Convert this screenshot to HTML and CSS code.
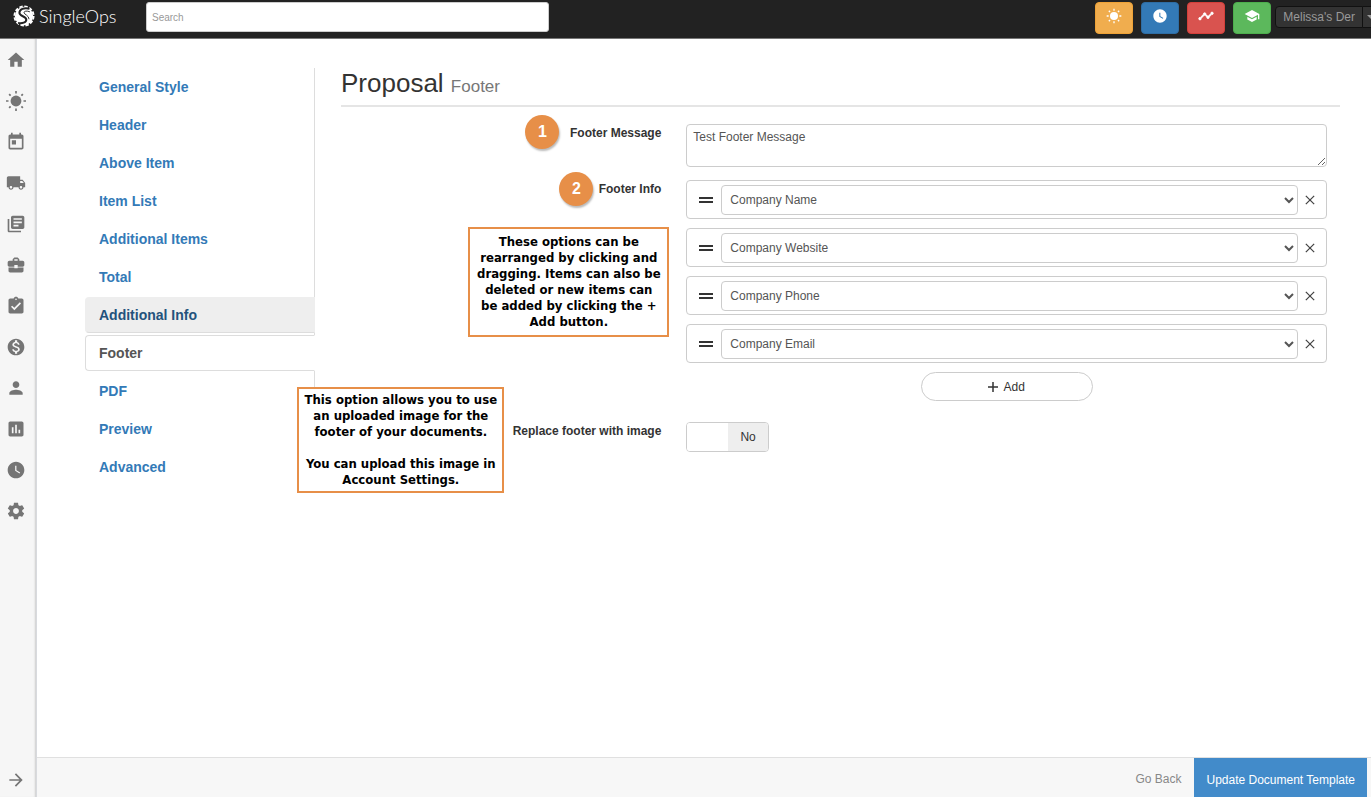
FILE: index.html
```html
<!DOCTYPE html>
<html lang="en">
<head>
    <meta charset="UTF-8">
    <meta name="viewport" content="width=device-width, initial-scale=1.0">
    <title>SingleOps - Proposal Footer</title>
    <link rel="stylesheet" href="styles.css">
</head>
<body>
    <!-- Top bar -->
    <header class="topbar">
        <a class="logo" href="#">
            <svg class="logo-mark" viewBox="0 0 24 24">
                <circle cx="12" cy="12" r="10" fill="#fff"/>
                <circle cx="12" cy="12" r="10.500" fill="none" stroke="#fff" stroke-width="2" stroke-dasharray="3.700 1.800"/>
                <path d="M18 4C12 2.500 7 4.500 7 8.500C7 12.500 14.500 12 14.500 16C14.500 19 10 20.500 5.500 19.500" fill="none" stroke="#222" stroke-width="2.200"/>
                <path d="M18.500 7.500C15 6 12 6.500 12 8.500C12 10 17.500 11.500 17.500 15.500" fill="none" stroke="#222" stroke-width="1"/>
            </svg>
            <span class="logo-text">SingleOps</span>
        </a>
        <input class="search" type="text" placeholder="Search" aria-label="Search">
        <div class="topbar-actions">
            <button class="action action-orange" aria-label="Today">
                <svg viewBox="0 0 24 24"><circle cx="12" cy="12" r="6"/><path d="M11 1h2v3h-2zM11 20h2v3h-2zM1 11h3v2H1zM20 11h3v2h-3zM3.500 5l1.500-1.500 1.800 1.800-1.500 1.500zM17.200 18.700l1.500-1.500 1.800 1.800-1.500 1.500zM17.200 5.300l1.800-1.800 1.500 1.500-1.800 1.800zM3.500 19l1.800-1.800 1.500 1.500L5 20.500z"/></svg>
            </button>
            <button class="action action-blue" aria-label="Time">
                <svg viewBox="0 0 24 24"><path d="M12 2C6.500 2 2 6.500 2 12s4.500 10 10 10 10-4.500 10-10S17.500 2 12 2zm4.200 14.200L11 13V7h1.500v5.200l4.500 2.700-.8 1.300z"/></svg>
            </button>
            <button class="action action-red" aria-label="Reports">
                <svg viewBox="0 0 24 24"><path d="M23 8c0 1.100-.9 2-2 2-.18 0-.35-.02-.51-.07l-3.560 3.550c.05.16.07.34.07.52 0 1.100-.9 2-2 2s-2-.9-2-2c0-.18.02-.36.07-.52l-2.550-2.550c-.16.05-.34.07-.52.07s-.36-.02-.52-.07l-4.550 4.560c.05.16.07.33.07.51 0 1.100-.9 2-2 2s-2-.9-2-2 .9-2 2-2c.18 0 .35.02.51.07l4.560-4.550C8.020 9.360 8 9.180 8 9c0-1.100.9-2 2-2s2 .9 2 2c0 .18-.02.36-.07.52l2.550 2.550c.16-.05.34-.07.52-.07s.36.02.52.07l3.550-3.560C19.020 8.350 19 8.180 19 8c0-1.100.9-2 2-2s2 .9 2 2z" stroke="#fff"/></svg>
            </button>
            <button class="action action-green" aria-label="Training">
                <svg viewBox="0 0 24 24"><path d="M5 13.180v4L12 21l7-3.820v-4L12 17l-7-3.820zM12 3L1 9l11 6 9-4.910V17h2V9L12 3z"/></svg>
            </button>
        </div>
        <div class="account">
            <button class="account-name">Melissa's Der</button>
            <button class="account-caret" aria-label="Account menu"><span class="caret"></span></button>
        </div>
    </header>

    <div class="layout">
        <!-- Icon sidebar -->
        <nav class="sidebar" aria-label="Main">
            <a href="#" aria-label="Home"><svg viewBox="0 0 24 24"><path d="M10 20v-6h4v6h5v-8h3L12 3 2 12h3v8z"/></svg></a>
            <a href="#" aria-label="Today"><svg viewBox="0 0 24 24"><circle cx="12" cy="12" r="6.500"/><path d="M11 0h2v3h-2zM11 21h2v3h-2zM0 11h3v2H0zM21 11h3v2h-3zM3 4.500L4.500 3l1.800 1.800-1.500 1.500zM17.700 19.200l1.500-1.500 1.800 1.800-1.500 1.500zM17.700 4.800L19.500 3 21 4.500l-1.800 1.800zM3 19.500l1.800-1.800 1.500 1.500L4.500 21z"/></svg></a>
            <a href="#" aria-label="Calendar"><svg viewBox="0 0 24 24"><path d="M19 3h-1V1h-2v2H8V1H6v2H5c-1.110 0-1.990.9-1.990 2L3 19c0 1.100.89 2 2 2h14c1.100 0 2-.9 2-2V5c0-1.100-.9-2-2-2zm0 16H5V8h14v11zM7 10h5v5H7z"/></svg></a>
            <a href="#" aria-label="Dispatch"><svg viewBox="0 0 24 24"><path d="M20 8h-3V4H3c-1.100 0-2 .9-2 2v11h2c0 1.660 1.340 3 3 3s3-1.340 3-3h6c0 1.660 1.340 3 3 3s3-1.340 3-3h2v-5l-3-4zM6 18.500c-.83 0-1.500-.67-1.500-1.500s.67-1.500 1.500-1.500 1.500.67 1.500 1.500-.67 1.500-1.500 1.500zm13.500-9l1.960 2.500H17V9.500h2.500zm-1.500 9c-.83 0-1.500-.67-1.500-1.500s.67-1.500 1.500-1.500 1.500.67 1.500 1.500-.67 1.500-1.500 1.500z"/></svg></a>
            <a href="#" aria-label="Documents"><svg viewBox="0 0 24 24"><path d="M4 6H2v14c0 1.100.9 2 2 2h14v-2H4V6zm16-4H8c-1.100 0-2 .9-2 2v12c0 1.100.9 2 2 2h12c1.100 0 2-.9 2-2V4c0-1.100-.9-2-2-2zm-1 9H9V9h10v2zm-4 4H9v-2h6v2zm4-8H9V5h10v2z"/></svg></a>
            <a href="#" aria-label="Jobs"><svg viewBox="0 0 24 24"><path d="M10 16v-1H3.010L3 19c0 1.110.89 2 2 2h14c1.110 0 2-.89 2-2v-4h-7v1h-4zm10-9h-4.010V5l-2-2h-4l-2 2v2H4c-1.100 0-2 .9-2 2v3c0 1.110.89 2 2 2h6v-2h4v2h6c1.100 0 2-.9 2-2V9c0-1.100-.9-2-2-2zm-6 0h-4V5h4v2z"/></svg></a>
            <a href="#" aria-label="Tasks"><svg viewBox="0 0 24 24"><path d="M19 3h-4.180C14.400 1.840 13.300 1 12 1c-1.300 0-2.400.84-2.820 2H5c-1.100 0-2 .9-2 2v14c0 1.100.9 2 2 2h14c1.100 0 2-.9 2-2V5c0-1.100-.9-2-2-2zm-7 0c.55 0 1 .45 1 1s-.45 1-1 1-1-.45-1-1 .45-1 1-1zm-2 14l-4-4 1.410-1.410L10 14.170l6.590-6.590L18 9l-8 8z"/></svg></a>
            <a href="#" aria-label="Payments"><svg viewBox="0 0 24 24"><path d="M12 2C6.480 2 2 6.480 2 12s4.480 10 10 10 10-4.480 10-10S17.520 2 12 2zm1.410 16.090V20h-2.670v-1.930c-1.710-.36-3.160-1.460-3.270-3.400h1.960c.1 1.050.82 1.870 2.650 1.870 1.960 0 2.400-.98 2.400-1.590 0-.83-.44-1.610-2.670-2.140-2.480-.6-4.180-1.620-4.180-3.670 0-1.720 1.390-2.840 3.110-3.210V4h2.670v1.950c1.860.45 2.790 1.860 2.850 3.390H14.300c-.05-1.110-.64-1.870-2.220-1.870-1.500 0-2.400.68-2.400 1.640 0 .84.65 1.390 2.670 1.910s4.180 1.390 4.180 3.910c-.01 1.830-1.380 2.830-3.120 3.160z"/></svg></a>
            <a href="#" aria-label="Clients"><svg viewBox="0 0 24 24"><path d="M12 12c2.210 0 4-1.790 4-4s-1.790-4-4-4-4 1.790-4 4 1.790 4 4 4zm0 2c-2.670 0-8 1.340-8 4v2h16v-2c0-2.660-5.330-4-8-4z"/></svg></a>
            <a href="#" aria-label="Reports"><svg viewBox="0 0 24 24"><path d="M19 3H5c-1.100 0-2 .9-2 2v14c0 1.100.9 2 2 2h14c1.100 0 2-.9 2-2V5c0-1.100-.9-2-2-2zM9 17H7v-7h2v7zm4 0h-2V7h2v10zm4 0h-2v-4h2v4z"/></svg></a>
            <a href="#" aria-label="Timesheets"><svg viewBox="0 0 24 24"><path d="M12 2C6.500 2 2 6.500 2 12s4.500 10 10 10 10-4.500 10-10S17.500 2 12 2zm4.200 14.200L11 13V7h1.500v5.200l4.500 2.700-.8 1.300z"/></svg></a>
            <a href="#" aria-label="Settings"><svg viewBox="0 0 24 24"><path d="M19.430 12.980c.04-.32.07-.64.07-.98s-.03-.66-.07-.98l2.110-1.650c.19-.15.24-.42.12-.64l-2-3.460c-.12-.22-.39-.3-.61-.22l-2.490 1c-.52-.4-1.080-.73-1.690-.98l-.38-2.650C14.460 2.180 14.250 2 14 2h-4c-.25 0-.46.18-.49.42l-.38 2.650c-.61.25-1.170.59-1.690.98l-2.490-1c-.23-.09-.49 0-.61.22l-2 3.460c-.13.22-.07.49.12.64l2.110 1.650c-.04.32-.07.65-.07.98s.03.66.07.98l-2.110 1.650c-.19.15-.24.42-.12.64l2 3.460c.12.22.39.3.61.22l2.490-1c.52.4 1.080.73 1.690.98l.38 2.650c.03.24.24.42.49.42h4c.25 0 .46-.18.49-.42l.38-2.650c.61-.25 1.170-.59 1.690-.98l2.490 1c.23.09.49 0 .61-.22l2-3.460c.12-.22.07-.49-.12-.64l-2.110-1.650zM12 15.500c-1.930 0-3.500-1.570-3.500-3.500s1.570-3.500 3.500-3.500 3.500 1.570 3.500 3.500-1.570 3.500-3.500 3.500z"/></svg></a>
            <a class="sidebar-expand" href="#" aria-label="Expand menu"><svg viewBox="0 0 24 24"><path d="M12 4l-1.410 1.410L16.170 11H4v2h12.170l-5.580 5.590L12 20l8-8z"/></svg></a>
        </nav>

        <div class="content">
            <main class="page">
                <nav class="tabs" aria-label="Template sections">
                    <a href="#">General Style</a>
                    <a href="#">Header</a>
                    <a href="#">Above Item</a>
                    <a href="#">Item List</a>
                    <a href="#">Additional Items</a>
                    <a href="#">Total</a>
                    <a class="hovered" href="#">Additional Info</a>
                    <a class="active" href="#">Footer</a>
                    <a href="#">PDF</a>
                    <a href="#">Preview</a>
                    <a href="#">Advanced</a>
                </nav>

                <section class="panel">
                    <h1>Proposal <small>Footer</small></h1>
                    <form class="form">
                        <div class="form-row">
                            <div class="form-label">
                                <span class="step step-message">1</span>
                                <label for="footer-message">Footer Message</label>
                            </div>
                            <textarea id="footer-message">Test Footer Message</textarea>
                        </div>

                        <div class="form-row">
                            <div class="form-label">
                                <span class="step step-info">2</span>
                                <label for="info-1">Footer Info</label>
                                <p class="note note-info">These options can be<br>rearranged by clicking and<br>dragging. Items can also be<br>deleted or new items can<br>be added by clicking the +<br>Add button.</p>
                            </div>
                            <div class="info-list">
                                <div class="info-item">
                                    <span class="handle"></span>
                                    <select id="info-1"><option>Company Name</option></select>
                                    <button class="remove" type="button" aria-label="Remove"><svg viewBox="0 0 12 12"><path d="M1 1l10 10M11 1L1 11"/></svg></button>
                                </div>
                                <div class="info-item">
                                    <span class="handle"></span>
                                    <select aria-label="Footer info 2"><option>Company Website</option></select>
                                    <button class="remove" type="button" aria-label="Remove"><svg viewBox="0 0 12 12"><path d="M1 1l10 10M11 1L1 11"/></svg></button>
                                </div>
                                <div class="info-item">
                                    <span class="handle"></span>
                                    <select aria-label="Footer info 3"><option>Company Phone</option></select>
                                    <button class="remove" type="button" aria-label="Remove"><svg viewBox="0 0 12 12"><path d="M1 1l10 10M11 1L1 11"/></svg></button>
                                </div>
                                <div class="info-item">
                                    <span class="handle"></span>
                                    <select aria-label="Footer info 4"><option>Company Email</option></select>
                                    <button class="remove" type="button" aria-label="Remove"><svg viewBox="0 0 12 12"><path d="M1 1l10 10M11 1L1 11"/></svg></button>
                                </div>
                                <button class="add" type="button"><svg viewBox="0 0 10 10"><path d="M5 0v10M0 5h10"/></svg>Add</button>
                            </div>
                        </div>

                        <div class="form-row form-row-image">
                            <div class="form-label">
                                <label for="replace-footer">Replace footer with image</label>
                                <p class="note note-image">This option allows you to use<br>an uploaded image for the<br>footer of your documents.<br><br>You can upload this image in<br>Account Settings.</p>
                            </div>
                            <div class="toggle">
                                <input type="checkbox" id="replace-footer">
                                <span>No</span>
                            </div>
                        </div>
                    </form>
                </section>
            </main>

            <footer class="bottombar">
                <a href="#">Go Back</a>
                <button class="update">Update Document Template</button>
            </footer>
        </div>
    </div>
</body>
</html>
```
FILE: styles.css
```css
* {
    box-sizing: border-box;
}

body {
    margin: 0;
    height: 100vh;
    display: flex;
    flex-direction: column;
    overflow: hidden;
    background: #fff;
    color: #333;
    font-family: "Liberation Sans", Arial, sans-serif;
    font-size: 12px;
    line-height: 16px;
}

a {
    text-decoration: none;
}

button, input, select, textarea {
    font-family: inherit;
    font-size: 12px;
}

button {
    cursor: pointer;
}

/* Top bar */
.topbar {
    display: flex;
    align-items: flex-start;
    height: 39px;
    flex-shrink: 0;
    padding-top: 2px;
    background: #222;
    border-bottom: 1px solid #777;
}

.logo {
    display: flex;
    align-items: center;
    gap: 3px;
    width: 146px;
    height: 28px;
    padding-left: 12px;
    color: #fff;
}

.logo-mark {
    width: 24px;
    height: 22px;
}

.logo-text {
    font-family: Lato, sans-serif;
    font-size: 18px;
    font-weight: 300;
}

.search {
    width: 403px;
    height: 30px;
    padding: 0 5px;
    border: 1px solid #ccc;
    border-radius: 3px;
    font-size: 10px;
}

.search::placeholder {
    color: #999;
}

.topbar-actions {
    display: flex;
    gap: 8px;
    margin-left: auto;
}

.action {
    width: 38px;
    height: 32px;
    padding: 0 0 4px;
    border: 1px solid;
    border-radius: 4px;
}

.action svg {
    width: 16px;
    height: 16px;
    fill: #fff;
    vertical-align: middle;
}

.action-orange {
    background: #f0ad4e;
    border-color: #eea236;
}

.action-blue {
    background: #337ab7;
    border-color: #2e6da4;
}

.action-red {
    background: #d9534f;
    border-color: #d43f3a;
}

.action-green {
    background: #5cb85c;
    border-color: #4cae4c;
}

.account {
    display: flex;
    height: 22px;
    margin: 4px 0 0 4px;
}

.account button {
    background: #333;
    border: 1px solid #111;
    color: #999;
}

.account-name {
    padding: 0 7px;
    border-radius: 4px 0 0 4px;
}

.account .account-caret {
    width: 8px;
    padding: 0 0 0 4px;
    border-width: 1px 0;
    overflow: hidden;
}

.caret {
    display: block;
    width: 8px;
    border: 4px solid transparent;
    border-top-color: #999;
    border-bottom: 0;
}

/* Sidebar and content */
.layout {
    display: flex;
    flex: 1;
    min-height: 0;
}

.sidebar {
    display: flex;
    flex-direction: column;
    align-items: center;
    gap: 21px;
    width: 37px;
    padding: 11px 4px 7px 0;
    background: #f6f6f6;
    border-right: 1px solid #d8dade;
    box-shadow: inset -2px 0 2px -1px #ccc;
}

.sidebar a {
    height: 20px;
}

.sidebar svg {
    width: 20px;
    height: 20px;
    fill: #757575;
}

.sidebar .sidebar-expand {
    margin-top: auto;
}

.content {
    display: flex;
    flex: 1;
    flex-direction: column;
    min-width: 0;
}

.page {
    display: flex;
    flex: 1;
    align-items: flex-start;
    gap: 26px;
    padding: 29px 31px 0 48px;
}

/* Section tabs */
.tabs {
    display: flex;
    flex-direction: column;
    gap: 2px;
    width: 230px;
    flex-shrink: 0;
    padding-top: 1px;
    border-right: 1px solid #ddd;
}

.tabs a {
    height: 36px;
    margin-right: -1px;
    padding: 0 13px;
    border: 1px solid transparent;
    border-radius: 4px 0 0 4px;
    color: #337ab7;
    font-size: 14px;
    font-weight: bold;
    line-height: 34px;
}

.tabs .hovered {
    background: #eee;
    border-color: #eee;
    border-bottom-color: #ddd;
    color: #23527c;
}

.tabs .active {
    background: #fff;
    border-color: #ddd;
    border-right-color: #fff;
    color: #555;
}

/* Form */
.panel {
    flex: 1;
    min-width: 0;
}

h1 {
    margin: 0;
    padding-bottom: 3px;
    border-bottom: 2px solid #e5e5e5;
    font-size: 26px;
    font-weight: normal;
    line-height: 30px;
}

h1 small {
    color: #777;
    font-size: 17px;
}

.form {
    display: flex;
    flex-direction: column;
    gap: 13px;
    padding: 17px 13px 0 0;
}

.form-row {
    display: grid;
    grid-template-columns: 1fr 2fr;
    column-gap: 25px;
}

.form-row-image {
    margin-top: 8px;
}

.form-label {
    position: relative;
    padding-top: 1px;
    text-align: right;
    font-weight: bold;
}

textarea {
    width: 100%;
    height: 43px;
    padding: 4px 6px;
    border: 1px solid #ccc;
    border-radius: 4px;
    color: #555;
    line-height: 16px;
}

.info-list {
    display: flex;
    flex-direction: column;
    gap: 9px;
}

.info-item {
    display: flex;
    align-items: center;
    height: 39px;
    padding: 0 8px 0 12px;
    border: 1px solid #ccc;
    border-radius: 4px;
}

.handle {
    width: 14px;
    height: 6px;
    margin-right: 8px;
    border: solid #333;
    border-width: 2px 0;
}

.info-item select {
    flex: 1;
    height: 30px;
    padding: 0 4px;
    border: 1px solid #ccc;
    border-radius: 4px;
    background: #fff;
    color: #555;
}

.remove {
    width: 16px;
    height: 16px;
    margin-left: 4px;
    padding: 0;
    border: 0;
    background: none;
}

.remove svg {
    display: block;
    width: 10px;
    height: 10px;
    margin: 0 auto;
    stroke: #444;
    stroke-width: 1.5;
}

.add {
    display: flex;
    align-items: center;
    justify-content: center;
    gap: 5px;
    align-self: center;
    width: 172px;
    height: 29px;
    border: 1px solid #ccc;
    border-radius: 15px;
    background: #fff;
    color: #333;
}

.add svg {
    width: 10px;
    height: 10px;
    stroke: #333;
    stroke-width: 1.5;
}

.toggle {
    display: flex;
    width: 83px;
    height: 30px;
    border: 1px solid #ccc;
    border-radius: 4px;
    overflow: hidden;
}

.toggle input {
    flex: 1;
    margin: 0;
    appearance: none;
    background: #fff;
}

.toggle span {
    flex: 1;
    background: #eee;
    line-height: 28px;
    text-align: center;
}

/* Help markers and notes on top of the form */
.step {
    position: absolute;
    width: 34px;
    height: 34px;
    border-radius: 50%;
    background: #e78f48;
    box-shadow: 1px 2px 2px #bbb;
    color: #fff;
    font-size: 16px;
    line-height: 33px;
    text-align: center;
}

.step-message {
    top: -9px;
    right: 102px;
}

.step-info {
    top: -8px;
    right: 68px;
}

.note {
    position: absolute;
    margin: 0;
    border: 2px solid #e78f48;
    background: #fff;
    color: #000;
    font-family: "DejaVu Sans Condensed", "Noto Sans", sans-serif;
    font-size: 13px;
    line-height: 16px;
    text-align: center;
    white-space: nowrap;
}

.note-info {
    top: 47px;
    right: -8px;
    width: 201px;
    padding: 5px 0;
}

.note-image {
    top: -35px;
    right: 157px;
    width: 207px;
    padding: 3px 0;
}

/* Bottom bar */
.bottombar {
    display: flex;
    align-items: stretch;
    justify-content: flex-end;
    gap: 13px;
    height: 40px;
    padding-right: 4px;
    background: #f7f7f7;
    border-top: 1px solid #e0e0e0;
}

.bottombar a {
    color: #888;
    line-height: 43px;
}

.update {
    padding: 4px 12px 0;
    border: 0;
    background: #428bca;
    color: #fff;
}
```
